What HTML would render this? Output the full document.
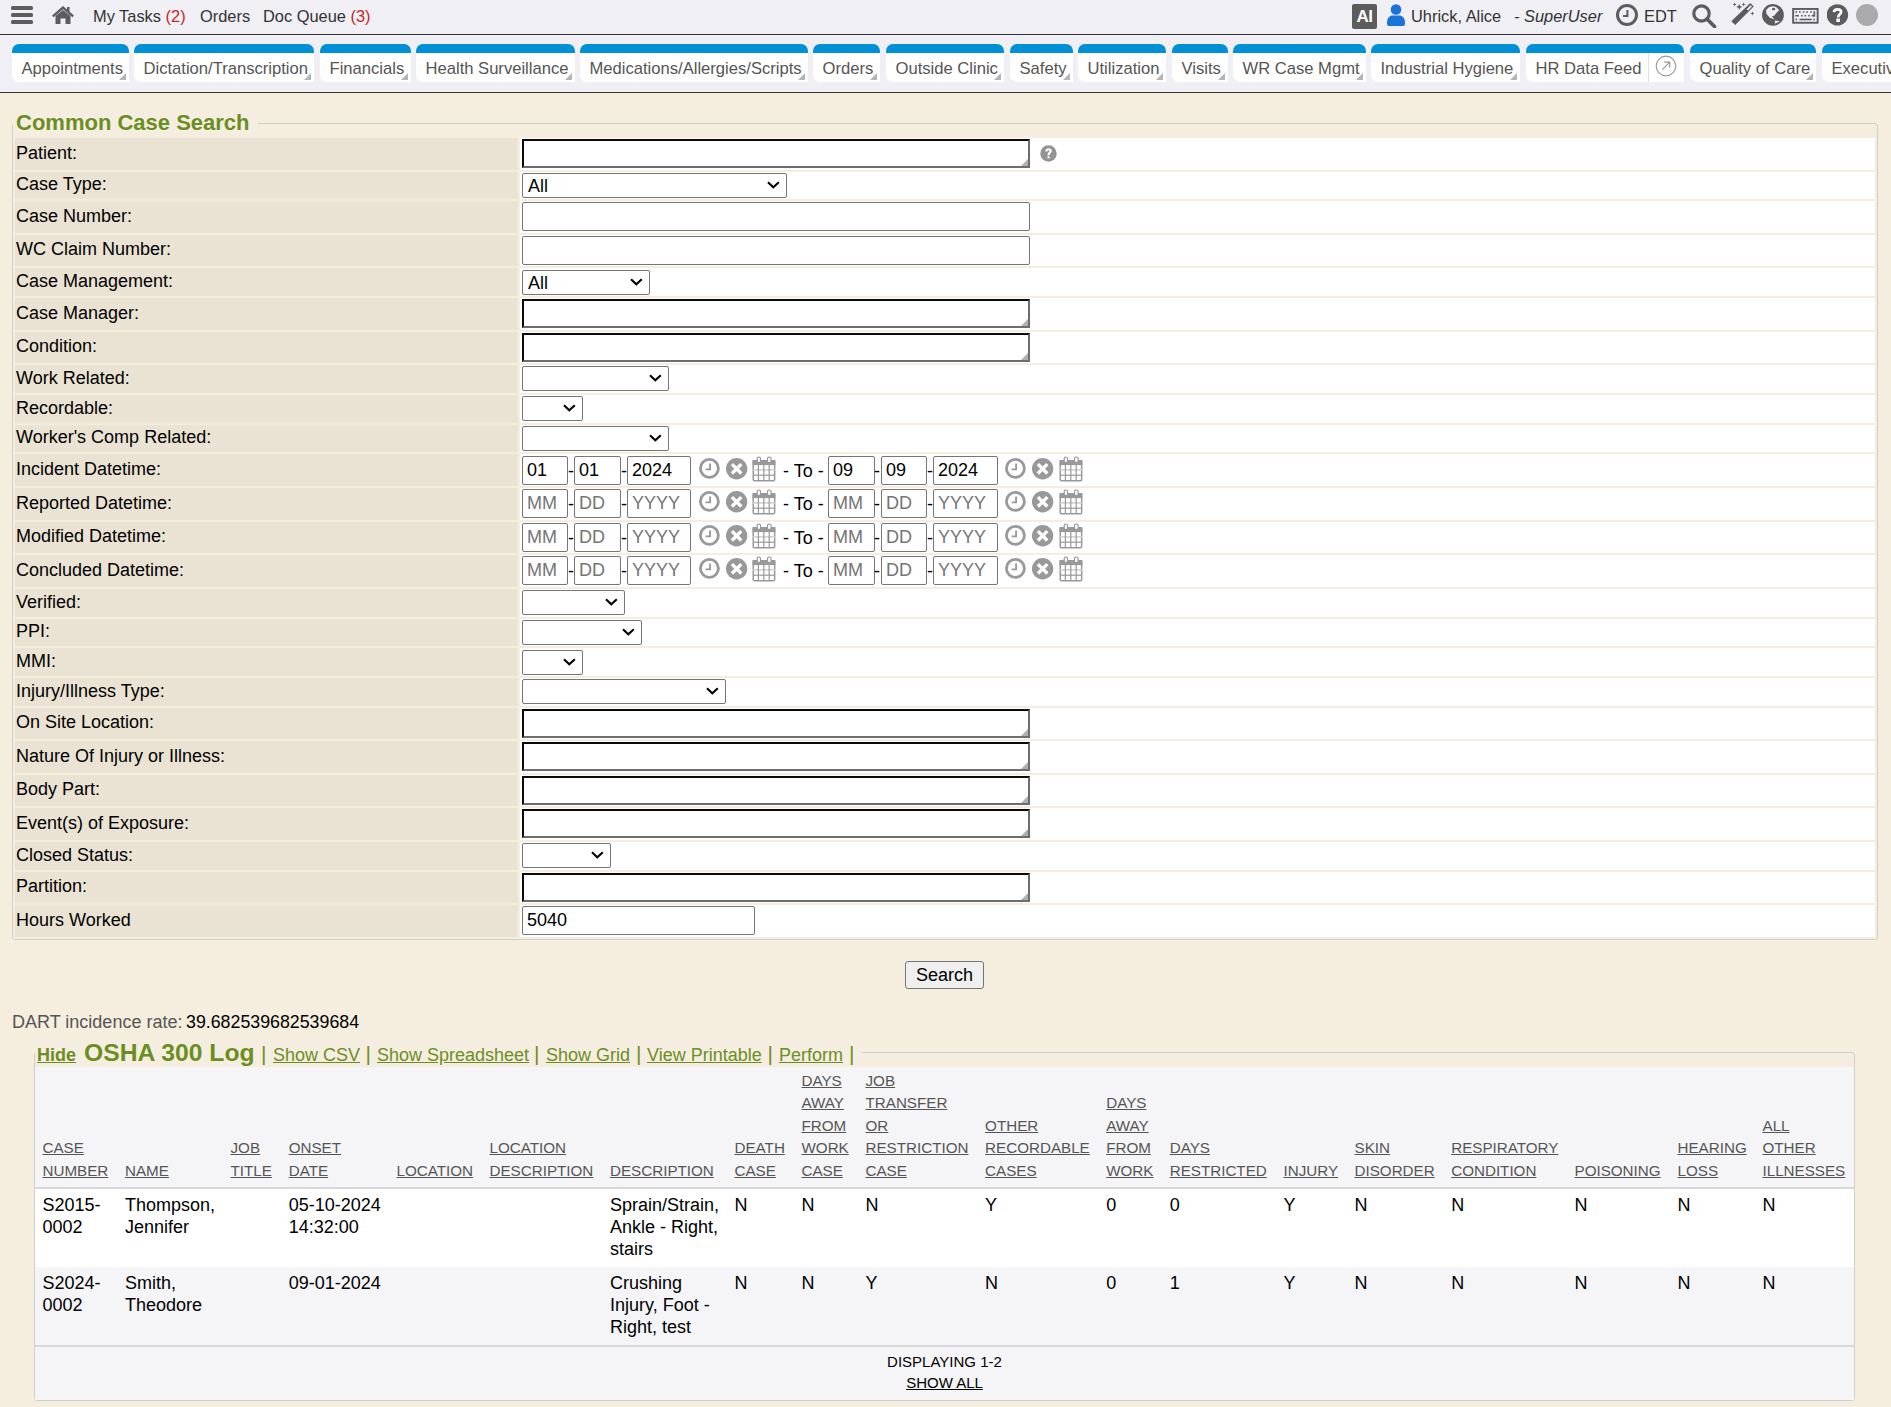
<!DOCTYPE html>
<html><head><meta charset="utf-8">
<style>
*{box-sizing:border-box}
html,body{margin:0;padding:0}
body{width:1891px;height:1407px;overflow:hidden;background:#f5eedf;font-family:"Liberation Sans",sans-serif;position:relative;color:#000}
.abs{position:absolute}
#top{position:absolute;left:0;top:0;width:1891px;height:35px;background:#efeff4;border-bottom:1px solid #333}
#top .t{position:absolute;top:6px;font-size:16.4px;color:#333;white-space:nowrap;line-height:20px}
#top .r{color:#c0282d}
#tabs{position:absolute;left:0;top:35px;width:1891px;height:58px;background:#efeff4;border-bottom:1px solid #333;overflow:hidden}
.tab{position:absolute;top:9px;height:38px;background:#fff;border-top:9px solid #0090d6;border-radius:7px 7px 0 7px;white-space:nowrap}
.tab span{position:absolute;left:9.5px;top:6px;font-size:16.6px;color:#555;line-height:19px}
.tab i{position:absolute;right:3px;bottom:2px;width:0;height:0;border-left:7px solid transparent;border-bottom:7px solid #b4b4b4}
</style></head><body>
<div id="top">
  <svg class="abs" style="left:11px;top:6px" width="22" height="18" viewBox="0 0 22 18"><rect x="0" y="0" width="22" height="4" rx="1.5" fill="#5c5c5c"/><rect x="0" y="7" width="22" height="4" rx="1.5" fill="#5c5c5c"/><rect x="0" y="14" width="22" height="4" rx="1.5" fill="#5c5c5c"/></svg>
  <svg class="abs" style="left:52px;top:6px" width="22" height="18" viewBox="0 0 22 18"><path d="M11 0 L0 9.5 L1.6 11.2 L11 3.2 L20.4 11.2 L22 9.5 L17.5 5.6 V1 H15 V3.5 Z" fill="#5c5c5c"/><path d="M3.5 10 L11 4 L18.5 10 V18 H13.5 V12.5 H8.5 V18 H3.5 Z" fill="#5c5c5c"/></svg>
  <div class="t" style="left:93px">My Tasks <span class="r">(2)</span></div>
  <div class="t" style="left:200px">Orders</div>
  <div class="t" style="left:263px">Doc Queue <span class="r">(3)</span></div>

  <div class="abs" style="left:1352px;top:4px;width:25px;height:25px;background:#5c5c5c;border-radius:2px;color:#fff;font-weight:bold;font-size:17px;line-height:25px;text-align:center;letter-spacing:-0.5px">AI</div>
  <svg class="abs" style="left:1387px;top:4px" width="18" height="22" viewBox="0 0 18 22"><circle cx="9" cy="5.5" r="5.3" fill="#1a73d9"/><path d="M0 19 C0 13.5 3 11.5 5.5 11.5 L12.5 11.5 C15 11.5 18 13.5 18 19 V20 Q18 22 16 22 H2 Q0 22 0 20 Z" fill="#1a73d9"/></svg>
  <div class="t" style="left:1411px">Uhrick, Alice</div>
  <div class="t" style="left:1514px;font-style:italic">- SuperUser</div>
  <svg class="abs" style="left:1616px;top:4px" width="22" height="22" viewBox="0 0 22 22"><circle cx="11" cy="11" r="9.5" fill="none" stroke="#5c5c5c" stroke-width="3"/><path d="M11.4 6 V11.9 H7" fill="none" stroke="#5c5c5c" stroke-width="2"/></svg>
  <div class="t" style="left:1644px">EDT</div>
  <svg class="abs" style="left:1692px;top:4px" width="25" height="24" viewBox="0 0 25 24"><circle cx="9.5" cy="9.5" r="7.7" fill="none" stroke="#5c5c5c" stroke-width="3.2"/><path d="M15 15 L22.5 22.5" stroke="#5c5c5c" stroke-width="3.8" stroke-linecap="round"/></svg>
  <svg class="abs" style="left:1726px;top:0px" width="34" height="30" viewBox="0 0 34 30"><path d="M5.3 21.3 L9.2 24.9 L27.7 6.4 L24.3 3 Z" fill="#5c5c5c"/><path d="M20.6 9.3 L22.1 10.6 L26 6.6 L24.6 5.2 Z" fill="#efeff4"/><path d="M8.6 2.4000000000000004 L9.16 3.84 L10.6 4.4 L9.16 4.96 L8.6 6.4 L8.04 4.96 L6.6 4.4 L8.04 3.84 Z M13.3 3.7 L14.20 6.00 L16.5 6.9 L14.20 7.80 L13.3 10.100000000000001 L12.40 7.80 L10.100000000000001 6.9 L12.40 6.00 Z M17.6 2.4000000000000004 L18.16 3.84 L19.6 4.4 L18.16 4.96 L17.6 6.4 L17.04 4.96 L15.600000000000001 4.4 L17.04 3.84 Z M26.4 11.4 L26.96 12.84 L28.4 13.4 L26.96 13.96 L26.4 15.4 L25.84 13.96 L24.4 13.4 L25.84 12.84 Z" fill="#5c5c5c"/></svg>
  <svg class="abs" style="left:1758px;top:0px" width="30" height="28" viewBox="0 0 30 28"><circle cx="14.95" cy="14.9" r="10.9" fill="#5c5c5c"/><path d="M8.1 10 L11.1 7 L14.9 6.3 L18.1 7 L21.3 10.2 L19.2 11.9 L16.2 15.8 L13.9 16.6 L16.6 19.6 L11.9 17.7 L8.5 13.9 Z" fill="#efeff4"/><path d="M14.1 8.1 H17.1 V10.2 H14.1 Z" fill="#5c5c5c"/><path d="M17.1 20.5 L22 21.3 L16.8 23.7 Z" fill="#efeff4"/></svg>
  <svg class="abs" style="left:1788px;top:0px" width="34" height="28" viewBox="0 0 34 28"><rect x="5.15" y="8.95" width="24.5" height="13.8" fill="none" stroke="#5c5c5c" stroke-width="1.9"/><g fill="#5c5c5c"><rect x="7.5" y="11.2" width="1.6" height="1.6"/><rect x="11" y="11.2" width="1.6" height="1.6"/><rect x="14.8" y="11.2" width="1.6" height="1.6"/><rect x="18.3" y="11.2" width="1.6" height="1.6"/><rect x="22.2" y="11.2" width="1.6" height="1.6"/><rect x="25.5" y="11.2" width="1.6" height="5.3"/><rect x="7.3" y="14.9" width="3.5" height="1.6"/><rect x="13" y="14.9" width="1.6" height="1.6"/><rect x="16.5" y="14.9" width="1.6" height="1.6"/><rect x="20.2" y="14.9" width="1.6" height="1.6"/><rect x="23.6" y="14.9" width="3.5" height="1.6"/><rect x="7.5" y="18.7" width="1.6" height="1.6"/><rect x="11.5" y="18.7" width="12.2" height="1.6"/><rect x="25.3" y="18.7" width="1.6" height="1.6"/></g></svg>
  <svg class="abs" style="left:1827px;top:4px" width="22" height="22" viewBox="0 0 22 22"><circle cx="10.4" cy="10.9" r="10.7" fill="#5c5c5c"/><path d="M6.9 8.1 C7.1 6.2 8.7 5.3 10.5 5.3 C12.6 5.3 14.1 6.4 14.1 8 C14.1 10.2 11.3 10.6 11.3 12.5 V13.6" fill="none" stroke="#fff" stroke-width="2.7"/><rect x="9.3" y="14.6" width="3.6" height="3.4" fill="#fff"/></svg>
  <div class="abs" style="left:1856px;top:4px;width:22px;height:22px;border-radius:50%;background:#aaa"></div>
</div>
<div id="tabs">
  <div class="tab" style="left:12px;width:117px"><span>Appointments</span><i></i></div>
  <div class="tab" style="left:134px;width:180px"><span>Dictation/Transcription</span><i></i></div>
  <div class="tab" style="left:320px;width:91px"><span>Financials</span><i></i></div>
  <div class="tab" style="left:416px;width:159px"><span>Health Surveillance</span><i></i></div>
  <div class="tab" style="left:580px;width:228px"><span>Medications/Allergies/Scripts</span><i></i></div>
  <div class="tab" style="left:813px;width:67px"><span>Orders</span><i></i></div>
  <div class="tab" style="left:886px;width:118px"><span>Outside Clinic</span><i></i></div>
  <div class="tab" style="left:1010px;width:63px"><span>Safety</span><i></i></div>
  <div class="tab" style="left:1078px;width:88px"><span>Utilization</span><i></i></div>
  <div class="tab" style="left:1172px;width:56px"><span>Visits</span><i></i></div>
  <div class="tab" style="left:1233px;width:133px"><span>WR Case Mgmt</span><i></i></div>
  <div class="tab" style="left:1371px;width:149px"><span>Industrial Hygiene</span><i></i></div>
  <div class="tab" style="left:1526px;width:158px"><span>HR Data Feed</span><div class="abs" style="left:122px;top:0;width:1px;height:29px;background:#e0e0e0"></div><svg class="abs" style="left:129px;top:2px" width="22" height="22" viewBox="0 0 22 22"><circle cx="11" cy="11" r="9.8" fill="none" stroke="#9a9a9a" stroke-width="1.2"/><path d="M7.3 14.7 L14.6 7.4 M9.2 7.2 H14.8 V12.8" fill="none" stroke="#9a9a9a" stroke-width="1.2"/></svg></div>
  <div class="tab" style="left:1690px;width:126px"><span>Quality of Care</span><i></i></div>
  <div class="tab" style="left:1822px;width:120px"><span>Executive</span><i></i></div>
</div>

<style>
#fs{position:absolute;left:12px;top:123px;width:1866px;height:817px;border:1px solid #cfcfcf;border-radius:3px}
#lg{position:absolute;left:13px;top:110px;width:245px;height:26px;background:#f5eee0}
#lg span{position:absolute;left:3px;top:0;font-size:22px;font-weight:bold;color:#6b8e23;line-height:26px;white-space:nowrap}
.lb{position:absolute;left:15px;width:503px;background:#eae3d3}
.lb span{position:absolute;left:1px;top:-1px;font-size:18px;white-space:nowrap}
.vl{position:absolute;left:520px;width:1355px;background:#fff}
.ta{position:absolute;left:522px;width:508px;height:29px;background:#fff;border-style:solid;border-width:2px;border-color:#0a0a0a #6d6d6d #6d6d6d #0a0a0a}
.ta i{position:absolute;right:0;bottom:0;width:0;height:0;border-left:7px solid transparent;border-bottom:7px solid #b0b0b0}
.sel{position:absolute;left:522px;height:25px;background:#fff;border:1px solid #767676;border-radius:2px}
.sel span{position:absolute;left:5px;top:1.7px;font-size:18px;line-height:21px}
.sel svg{position:absolute;right:5.6px;top:7.4px}
.inp{position:absolute;height:29px;background:#fff;border:1px solid #767676;border-radius:2px}
.inp span{position:absolute;left:4px;top:3px;font-size:18px;line-height:21px;white-space:nowrap}
.inp span.ph{color:#757575}
.dash{position:absolute;font-size:18px;line-height:21px}
.ico{position:absolute}
.to{position:absolute;font-size:18px;line-height:21px;white-space:nowrap}
</style>
<div id="fs"></div><div id="lg"><span>Common Case Search</span></div><div class="lb" style="top:138px;height:32px;line-height:32px"><span>Patient:</span></div><div class="vl" style="top:138px;height:32px"></div><div class="ta" style="top:139px"><i></i></div><div class="lb" style="top:172px;height:27px;line-height:27px"><span>Case Type:</span></div><div class="vl" style="top:172px;height:27px"></div><div class="sel" style="top:173px;width:265px"><span>All</span><svg width="13" height="8" viewBox="0 0 13 8"><path d="M1 1.3 L6.3 6.3 L11.8 1.3" fill="none" stroke="#000" stroke-width="2.1"/></svg></div><div class="lb" style="top:201px;height:32px;line-height:32px"><span>Case Number:</span></div><div class="vl" style="top:201px;height:32px"></div><div class="inp" style="left:522px;top:202px;width:508px"><span></span></div><div class="lb" style="top:235px;height:31px;line-height:31px"><span>WC Claim Number:</span></div><div class="vl" style="top:235px;height:31px"></div><div class="inp" style="left:522px;top:236px;width:508px"><span></span></div><div class="lb" style="top:268px;height:28px;line-height:28px"><span>Case Management:</span></div><div class="vl" style="top:268px;height:28px"></div><div class="sel" style="top:270px;width:128px"><span>All</span><svg width="13" height="8" viewBox="0 0 13 8"><path d="M1 1.3 L6.3 6.3 L11.8 1.3" fill="none" stroke="#000" stroke-width="2.1"/></svg></div><div class="lb" style="top:298px;height:32px;line-height:32px"><span>Case Manager:</span></div><div class="vl" style="top:298px;height:32px"></div><div class="ta" style="top:299px"><i></i></div><div class="lb" style="top:332px;height:31px;line-height:31px"><span>Condition:</span></div><div class="vl" style="top:332px;height:31px"></div><div class="ta" style="top:333px"><i></i></div><div class="lb" style="top:365px;height:28px;line-height:28px"><span>Work Related:</span></div><div class="vl" style="top:365px;height:28px"></div><div class="sel" style="top:366px;width:147px"><span></span><svg width="13" height="8" viewBox="0 0 13 8"><path d="M1 1.3 L6.3 6.3 L11.8 1.3" fill="none" stroke="#000" stroke-width="2.1"/></svg></div><div class="lb" style="top:395px;height:28px;line-height:28px"><span>Recordable:</span></div><div class="vl" style="top:395px;height:28px"></div><div class="sel" style="top:396px;width:61px"><span></span><svg width="13" height="8" viewBox="0 0 13 8"><path d="M1 1.3 L6.3 6.3 L11.8 1.3" fill="none" stroke="#000" stroke-width="2.1"/></svg></div><div class="lb" style="top:425px;height:27px;line-height:27px"><span>Worker's Comp Related:</span></div><div class="vl" style="top:425px;height:27px"></div><div class="sel" style="top:426px;width:147px"><span></span><svg width="13" height="8" viewBox="0 0 13 8"><path d="M1 1.3 L6.3 6.3 L11.8 1.3" fill="none" stroke="#000" stroke-width="2.1"/></svg></div><div class="lb" style="top:454px;height:32px;line-height:32px"><span>Incident Datetime:</span></div><div class="vl" style="top:454px;height:32px"></div><div class="inp" style="left:522px;top:456px;width:46px"><span>01</span></div><div class="inp" style="left:574px;top:456px;width:47px"><span>01</span></div><div class="inp" style="left:627px;top:456px;width:64px"><span>2024</span></div><div class="dash" style="left:568px;top:461px">-</div><div class="dash" style="left:621px;top:461px">-</div><svg class="ico" style="left:699px;top:458px" width="21" height="21" viewBox="0 0 21 21"><circle cx="10.4" cy="10.4" r="9" fill="none" stroke="#999" stroke-width="2.8"/><path d="M11.1 5.5 V11.4 H6.6" fill="none" stroke="#999" stroke-width="1.9"/></svg><svg class="ico" style="left:726px;top:458px" width="23" height="23" viewBox="0 0 23 23"><circle cx="10.6" cy="10.8" r="10.7" fill="#999"/><path d="M5.9 6.1 L15.3 15.5 M15.3 6.1 L5.9 15.5" stroke="#fff" stroke-width="3.3"/></svg><svg class="ico" style="left:752px;top:456px" width="25" height="27" viewBox="0 0 25 27"><rect x="1.25" y="4.75" width="21.4" height="20" rx="1.2" fill="#fff" stroke="#999" stroke-width="1.5"/><rect x="0.5" y="4" width="22.9" height="5.1" fill="#999"/><line x1="1" y1="13.9" x2="23" y2="13.9" stroke="#cfcfcf" stroke-width="1.5"/><line x1="1" y1="19.2" x2="23" y2="19.2" stroke="#999" stroke-width="1.2"/><line x1="6.4" y1="8" x2="6.4" y2="25" stroke="#999" stroke-width="1.2"/><line x1="11.8" y1="8" x2="11.8" y2="25" stroke="#999" stroke-width="1.2"/><line x1="17.2" y1="8" x2="17.2" y2="25" stroke="#999" stroke-width="1.2"/><rect x="5.2" y="1" width="3.3" height="5.6" rx="1.6" fill="#fff" stroke="#999" stroke-width="1.2"/><rect x="15.5" y="1" width="3.6" height="5.6" rx="1.6" fill="#fff" stroke="#999" stroke-width="1.2"/></svg><div class="inp" style="left:828px;top:456px;width:47px"><span>09</span></div><div class="inp" style="left:881px;top:456px;width:46px"><span>09</span></div><div class="inp" style="left:933px;top:456px;width:65px"><span>2024</span></div><div class="dash" style="left:874px;top:461px">-</div><div class="dash" style="left:927px;top:461px">-</div><svg class="ico" style="left:1005px;top:458px" width="21" height="21" viewBox="0 0 21 21"><circle cx="10.4" cy="10.4" r="9" fill="none" stroke="#999" stroke-width="2.8"/><path d="M11.1 5.5 V11.4 H6.6" fill="none" stroke="#999" stroke-width="1.9"/></svg><svg class="ico" style="left:1032px;top:458px" width="23" height="23" viewBox="0 0 23 23"><circle cx="10.6" cy="10.8" r="10.7" fill="#999"/><path d="M5.9 6.1 L15.3 15.5 M15.3 6.1 L5.9 15.5" stroke="#fff" stroke-width="3.3"/></svg><svg class="ico" style="left:1059px;top:456px" width="25" height="27" viewBox="0 0 25 27"><rect x="1.25" y="4.75" width="21.4" height="20" rx="1.2" fill="#fff" stroke="#999" stroke-width="1.5"/><rect x="0.5" y="4" width="22.9" height="5.1" fill="#999"/><line x1="1" y1="13.9" x2="23" y2="13.9" stroke="#cfcfcf" stroke-width="1.5"/><line x1="1" y1="19.2" x2="23" y2="19.2" stroke="#999" stroke-width="1.2"/><line x1="6.4" y1="8" x2="6.4" y2="25" stroke="#999" stroke-width="1.2"/><line x1="11.8" y1="8" x2="11.8" y2="25" stroke="#999" stroke-width="1.2"/><line x1="17.2" y1="8" x2="17.2" y2="25" stroke="#999" stroke-width="1.2"/><rect x="5.2" y="1" width="3.3" height="5.6" rx="1.6" fill="#fff" stroke="#999" stroke-width="1.2"/><rect x="15.5" y="1" width="3.6" height="5.6" rx="1.6" fill="#fff" stroke="#999" stroke-width="1.2"/></svg><div class="to" style="left:783px;top:461px">- To -</div><div class="lb" style="top:488px;height:32px;line-height:32px"><span>Reported Datetime:</span></div><div class="vl" style="top:488px;height:32px"></div><div class="inp" style="left:522px;top:489px;width:46px"><span class="ph">MM</span></div><div class="inp" style="left:574px;top:489px;width:47px"><span class="ph">DD</span></div><div class="inp" style="left:627px;top:489px;width:64px"><span class="ph">YYYY</span></div><div class="dash" style="left:568px;top:494px">-</div><div class="dash" style="left:621px;top:494px">-</div><svg class="ico" style="left:699px;top:491px" width="21" height="21" viewBox="0 0 21 21"><circle cx="10.4" cy="10.4" r="9" fill="none" stroke="#999" stroke-width="2.8"/><path d="M11.1 5.5 V11.4 H6.6" fill="none" stroke="#999" stroke-width="1.9"/></svg><svg class="ico" style="left:726px;top:491px" width="23" height="23" viewBox="0 0 23 23"><circle cx="10.6" cy="10.8" r="10.7" fill="#999"/><path d="M5.9 6.1 L15.3 15.5 M15.3 6.1 L5.9 15.5" stroke="#fff" stroke-width="3.3"/></svg><svg class="ico" style="left:752px;top:489px" width="25" height="27" viewBox="0 0 25 27"><rect x="1.25" y="4.75" width="21.4" height="20" rx="1.2" fill="#fff" stroke="#999" stroke-width="1.5"/><rect x="0.5" y="4" width="22.9" height="5.1" fill="#999"/><line x1="1" y1="13.9" x2="23" y2="13.9" stroke="#cfcfcf" stroke-width="1.5"/><line x1="1" y1="19.2" x2="23" y2="19.2" stroke="#999" stroke-width="1.2"/><line x1="6.4" y1="8" x2="6.4" y2="25" stroke="#999" stroke-width="1.2"/><line x1="11.8" y1="8" x2="11.8" y2="25" stroke="#999" stroke-width="1.2"/><line x1="17.2" y1="8" x2="17.2" y2="25" stroke="#999" stroke-width="1.2"/><rect x="5.2" y="1" width="3.3" height="5.6" rx="1.6" fill="#fff" stroke="#999" stroke-width="1.2"/><rect x="15.5" y="1" width="3.6" height="5.6" rx="1.6" fill="#fff" stroke="#999" stroke-width="1.2"/></svg><div class="inp" style="left:828px;top:489px;width:47px"><span class="ph">MM</span></div><div class="inp" style="left:881px;top:489px;width:46px"><span class="ph">DD</span></div><div class="inp" style="left:933px;top:489px;width:65px"><span class="ph">YYYY</span></div><div class="dash" style="left:874px;top:494px">-</div><div class="dash" style="left:927px;top:494px">-</div><svg class="ico" style="left:1005px;top:491px" width="21" height="21" viewBox="0 0 21 21"><circle cx="10.4" cy="10.4" r="9" fill="none" stroke="#999" stroke-width="2.8"/><path d="M11.1 5.5 V11.4 H6.6" fill="none" stroke="#999" stroke-width="1.9"/></svg><svg class="ico" style="left:1032px;top:491px" width="23" height="23" viewBox="0 0 23 23"><circle cx="10.6" cy="10.8" r="10.7" fill="#999"/><path d="M5.9 6.1 L15.3 15.5 M15.3 6.1 L5.9 15.5" stroke="#fff" stroke-width="3.3"/></svg><svg class="ico" style="left:1059px;top:489px" width="25" height="27" viewBox="0 0 25 27"><rect x="1.25" y="4.75" width="21.4" height="20" rx="1.2" fill="#fff" stroke="#999" stroke-width="1.5"/><rect x="0.5" y="4" width="22.9" height="5.1" fill="#999"/><line x1="1" y1="13.9" x2="23" y2="13.9" stroke="#cfcfcf" stroke-width="1.5"/><line x1="1" y1="19.2" x2="23" y2="19.2" stroke="#999" stroke-width="1.2"/><line x1="6.4" y1="8" x2="6.4" y2="25" stroke="#999" stroke-width="1.2"/><line x1="11.8" y1="8" x2="11.8" y2="25" stroke="#999" stroke-width="1.2"/><line x1="17.2" y1="8" x2="17.2" y2="25" stroke="#999" stroke-width="1.2"/><rect x="5.2" y="1" width="3.3" height="5.6" rx="1.6" fill="#fff" stroke="#999" stroke-width="1.2"/><rect x="15.5" y="1" width="3.6" height="5.6" rx="1.6" fill="#fff" stroke="#999" stroke-width="1.2"/></svg><div class="to" style="left:783px;top:494px">- To -</div><div class="lb" style="top:522px;height:31px;line-height:31px"><span>Modified Datetime:</span></div><div class="vl" style="top:522px;height:31px"></div><div class="inp" style="left:522px;top:523px;width:46px"><span class="ph">MM</span></div><div class="inp" style="left:574px;top:523px;width:47px"><span class="ph">DD</span></div><div class="inp" style="left:627px;top:523px;width:64px"><span class="ph">YYYY</span></div><div class="dash" style="left:568px;top:528px">-</div><div class="dash" style="left:621px;top:528px">-</div><svg class="ico" style="left:699px;top:525px" width="21" height="21" viewBox="0 0 21 21"><circle cx="10.4" cy="10.4" r="9" fill="none" stroke="#999" stroke-width="2.8"/><path d="M11.1 5.5 V11.4 H6.6" fill="none" stroke="#999" stroke-width="1.9"/></svg><svg class="ico" style="left:726px;top:525px" width="23" height="23" viewBox="0 0 23 23"><circle cx="10.6" cy="10.8" r="10.7" fill="#999"/><path d="M5.9 6.1 L15.3 15.5 M15.3 6.1 L5.9 15.5" stroke="#fff" stroke-width="3.3"/></svg><svg class="ico" style="left:752px;top:523px" width="25" height="27" viewBox="0 0 25 27"><rect x="1.25" y="4.75" width="21.4" height="20" rx="1.2" fill="#fff" stroke="#999" stroke-width="1.5"/><rect x="0.5" y="4" width="22.9" height="5.1" fill="#999"/><line x1="1" y1="13.9" x2="23" y2="13.9" stroke="#cfcfcf" stroke-width="1.5"/><line x1="1" y1="19.2" x2="23" y2="19.2" stroke="#999" stroke-width="1.2"/><line x1="6.4" y1="8" x2="6.4" y2="25" stroke="#999" stroke-width="1.2"/><line x1="11.8" y1="8" x2="11.8" y2="25" stroke="#999" stroke-width="1.2"/><line x1="17.2" y1="8" x2="17.2" y2="25" stroke="#999" stroke-width="1.2"/><rect x="5.2" y="1" width="3.3" height="5.6" rx="1.6" fill="#fff" stroke="#999" stroke-width="1.2"/><rect x="15.5" y="1" width="3.6" height="5.6" rx="1.6" fill="#fff" stroke="#999" stroke-width="1.2"/></svg><div class="inp" style="left:828px;top:523px;width:47px"><span class="ph">MM</span></div><div class="inp" style="left:881px;top:523px;width:46px"><span class="ph">DD</span></div><div class="inp" style="left:933px;top:523px;width:65px"><span class="ph">YYYY</span></div><div class="dash" style="left:874px;top:528px">-</div><div class="dash" style="left:927px;top:528px">-</div><svg class="ico" style="left:1005px;top:525px" width="21" height="21" viewBox="0 0 21 21"><circle cx="10.4" cy="10.4" r="9" fill="none" stroke="#999" stroke-width="2.8"/><path d="M11.1 5.5 V11.4 H6.6" fill="none" stroke="#999" stroke-width="1.9"/></svg><svg class="ico" style="left:1032px;top:525px" width="23" height="23" viewBox="0 0 23 23"><circle cx="10.6" cy="10.8" r="10.7" fill="#999"/><path d="M5.9 6.1 L15.3 15.5 M15.3 6.1 L5.9 15.5" stroke="#fff" stroke-width="3.3"/></svg><svg class="ico" style="left:1059px;top:523px" width="25" height="27" viewBox="0 0 25 27"><rect x="1.25" y="4.75" width="21.4" height="20" rx="1.2" fill="#fff" stroke="#999" stroke-width="1.5"/><rect x="0.5" y="4" width="22.9" height="5.1" fill="#999"/><line x1="1" y1="13.9" x2="23" y2="13.9" stroke="#cfcfcf" stroke-width="1.5"/><line x1="1" y1="19.2" x2="23" y2="19.2" stroke="#999" stroke-width="1.2"/><line x1="6.4" y1="8" x2="6.4" y2="25" stroke="#999" stroke-width="1.2"/><line x1="11.8" y1="8" x2="11.8" y2="25" stroke="#999" stroke-width="1.2"/><line x1="17.2" y1="8" x2="17.2" y2="25" stroke="#999" stroke-width="1.2"/><rect x="5.2" y="1" width="3.3" height="5.6" rx="1.6" fill="#fff" stroke="#999" stroke-width="1.2"/><rect x="15.5" y="1" width="3.6" height="5.6" rx="1.6" fill="#fff" stroke="#999" stroke-width="1.2"/></svg><div class="to" style="left:783px;top:528px">- To -</div><div class="lb" style="top:555px;height:32px;line-height:32px"><span>Concluded Datetime:</span></div><div class="vl" style="top:555px;height:32px"></div><div class="inp" style="left:522px;top:556px;width:46px"><span class="ph">MM</span></div><div class="inp" style="left:574px;top:556px;width:47px"><span class="ph">DD</span></div><div class="inp" style="left:627px;top:556px;width:64px"><span class="ph">YYYY</span></div><div class="dash" style="left:568px;top:561px">-</div><div class="dash" style="left:621px;top:561px">-</div><svg class="ico" style="left:699px;top:558px" width="21" height="21" viewBox="0 0 21 21"><circle cx="10.4" cy="10.4" r="9" fill="none" stroke="#999" stroke-width="2.8"/><path d="M11.1 5.5 V11.4 H6.6" fill="none" stroke="#999" stroke-width="1.9"/></svg><svg class="ico" style="left:726px;top:558px" width="23" height="23" viewBox="0 0 23 23"><circle cx="10.6" cy="10.8" r="10.7" fill="#999"/><path d="M5.9 6.1 L15.3 15.5 M15.3 6.1 L5.9 15.5" stroke="#fff" stroke-width="3.3"/></svg><svg class="ico" style="left:752px;top:556px" width="25" height="27" viewBox="0 0 25 27"><rect x="1.25" y="4.75" width="21.4" height="20" rx="1.2" fill="#fff" stroke="#999" stroke-width="1.5"/><rect x="0.5" y="4" width="22.9" height="5.1" fill="#999"/><line x1="1" y1="13.9" x2="23" y2="13.9" stroke="#cfcfcf" stroke-width="1.5"/><line x1="1" y1="19.2" x2="23" y2="19.2" stroke="#999" stroke-width="1.2"/><line x1="6.4" y1="8" x2="6.4" y2="25" stroke="#999" stroke-width="1.2"/><line x1="11.8" y1="8" x2="11.8" y2="25" stroke="#999" stroke-width="1.2"/><line x1="17.2" y1="8" x2="17.2" y2="25" stroke="#999" stroke-width="1.2"/><rect x="5.2" y="1" width="3.3" height="5.6" rx="1.6" fill="#fff" stroke="#999" stroke-width="1.2"/><rect x="15.5" y="1" width="3.6" height="5.6" rx="1.6" fill="#fff" stroke="#999" stroke-width="1.2"/></svg><div class="inp" style="left:828px;top:556px;width:47px"><span class="ph">MM</span></div><div class="inp" style="left:881px;top:556px;width:46px"><span class="ph">DD</span></div><div class="inp" style="left:933px;top:556px;width:65px"><span class="ph">YYYY</span></div><div class="dash" style="left:874px;top:561px">-</div><div class="dash" style="left:927px;top:561px">-</div><svg class="ico" style="left:1005px;top:558px" width="21" height="21" viewBox="0 0 21 21"><circle cx="10.4" cy="10.4" r="9" fill="none" stroke="#999" stroke-width="2.8"/><path d="M11.1 5.5 V11.4 H6.6" fill="none" stroke="#999" stroke-width="1.9"/></svg><svg class="ico" style="left:1032px;top:558px" width="23" height="23" viewBox="0 0 23 23"><circle cx="10.6" cy="10.8" r="10.7" fill="#999"/><path d="M5.9 6.1 L15.3 15.5 M15.3 6.1 L5.9 15.5" stroke="#fff" stroke-width="3.3"/></svg><svg class="ico" style="left:1059px;top:556px" width="25" height="27" viewBox="0 0 25 27"><rect x="1.25" y="4.75" width="21.4" height="20" rx="1.2" fill="#fff" stroke="#999" stroke-width="1.5"/><rect x="0.5" y="4" width="22.9" height="5.1" fill="#999"/><line x1="1" y1="13.9" x2="23" y2="13.9" stroke="#cfcfcf" stroke-width="1.5"/><line x1="1" y1="19.2" x2="23" y2="19.2" stroke="#999" stroke-width="1.2"/><line x1="6.4" y1="8" x2="6.4" y2="25" stroke="#999" stroke-width="1.2"/><line x1="11.8" y1="8" x2="11.8" y2="25" stroke="#999" stroke-width="1.2"/><line x1="17.2" y1="8" x2="17.2" y2="25" stroke="#999" stroke-width="1.2"/><rect x="5.2" y="1" width="3.3" height="5.6" rx="1.6" fill="#fff" stroke="#999" stroke-width="1.2"/><rect x="15.5" y="1" width="3.6" height="5.6" rx="1.6" fill="#fff" stroke="#999" stroke-width="1.2"/></svg><div class="to" style="left:783px;top:561px">- To -</div><div class="lb" style="top:589px;height:28px;line-height:28px"><span>Verified:</span></div><div class="vl" style="top:589px;height:28px"></div><div class="sel" style="top:590px;width:103px"><span></span><svg width="13" height="8" viewBox="0 0 13 8"><path d="M1 1.3 L6.3 6.3 L11.8 1.3" fill="none" stroke="#000" stroke-width="2.1"/></svg></div><div class="lb" style="top:619px;height:27px;line-height:27px"><span>PPI:</span></div><div class="vl" style="top:619px;height:27px"></div><div class="sel" style="top:620px;width:120px"><span></span><svg width="13" height="8" viewBox="0 0 13 8"><path d="M1 1.3 L6.3 6.3 L11.8 1.3" fill="none" stroke="#000" stroke-width="2.1"/></svg></div><div class="lb" style="top:648px;height:28px;line-height:28px"><span>MMI:</span></div><div class="vl" style="top:648px;height:28px"></div><div class="sel" style="top:650px;width:61px"><span></span><svg width="13" height="8" viewBox="0 0 13 8"><path d="M1 1.3 L6.3 6.3 L11.8 1.3" fill="none" stroke="#000" stroke-width="2.1"/></svg></div><div class="lb" style="top:678px;height:28px;line-height:28px"><span>Injury/Illness Type:</span></div><div class="vl" style="top:678px;height:28px"></div><div class="sel" style="top:679px;width:204px"><span></span><svg width="13" height="8" viewBox="0 0 13 8"><path d="M1 1.3 L6.3 6.3 L11.8 1.3" fill="none" stroke="#000" stroke-width="2.1"/></svg></div><div class="lb" style="top:708px;height:31px;line-height:31px"><span>On Site Location:</span></div><div class="vl" style="top:708px;height:31px"></div><div class="ta" style="top:709px"><i></i></div><div class="lb" style="top:741px;height:32px;line-height:32px"><span>Nature Of Injury or Illness:</span></div><div class="vl" style="top:741px;height:32px"></div><div class="ta" style="top:742px"><i></i></div><div class="lb" style="top:775px;height:31px;line-height:31px"><span>Body Part:</span></div><div class="vl" style="top:775px;height:31px"></div><div class="ta" style="top:776px"><i></i></div><div class="lb" style="top:808px;height:32px;line-height:32px"><span>Event(s) of Exposure:</span></div><div class="vl" style="top:808px;height:32px"></div><div class="ta" style="top:809px"><i></i></div><div class="lb" style="top:842px;height:28px;line-height:28px"><span>Closed Status:</span></div><div class="vl" style="top:842px;height:28px"></div><div class="sel" style="top:843px;width:89px"><span></span><svg width="13" height="8" viewBox="0 0 13 8"><path d="M1 1.3 L6.3 6.3 L11.8 1.3" fill="none" stroke="#000" stroke-width="2.1"/></svg></div><div class="lb" style="top:872px;height:31px;line-height:31px"><span>Partition:</span></div><div class="vl" style="top:872px;height:31px"></div><div class="ta" style="top:873px"><i></i></div><div class="lb" style="top:905px;height:32px;line-height:32px"><span>Hours Worked</span></div><div class="vl" style="top:905px;height:32px"></div><div class="inp" style="left:522px;top:906px;width:233px"><span>5040</span></div><svg class="ico" style="left:1040px;top:145px" width="17" height="17" viewBox="0 0 17 17"><circle cx="8.5" cy="8.5" r="8.2" fill="#949494"/><path d="M5.3 6.4 C5.3 4.3 6.8 3.3 8.6 3.3 C10.5 3.3 11.8 4.4 11.8 6 C11.8 8 9.6 8.3 9.6 10 V10.3 H7.5 V9.7 C7.5 7.4 9.5 7.3 9.5 6.1 C9.5 5.5 9.1 5.2 8.5 5.2 C7.9 5.2 7.5 5.6 7.5 6.4 Z" fill="#fff"/><rect x="7.5" y="11.3" width="2.1" height="2.1" fill="#fff"/></svg><!--REST-->
<style>
#btn{position:absolute;left:905px;top:961px;width:79px;height:28px;background:#efefef;border:1px solid #767676;border-radius:3px;font-size:18px;line-height:26px;text-align:center}
#dart{position:absolute;left:12px;top:1011px;font-size:18px;line-height:22px;color:#555;white-space:nowrap}
#dart b{font-weight:normal;color:#000;position:absolute;left:174px;top:0;font-size:17.8px}
#fs2{position:absolute;left:34px;top:1052px;width:1821px;height:349px;border:1px solid #cfcfcf;border-radius:3px}
#lg2{position:absolute;left:35px;top:1038px;width:827px;height:28px;background:#f5eee0;white-space:nowrap;color:#6b8e23}
#lg2 span{position:absolute;top:0;line-height:28px}
#lg2 .u{text-decoration:underline}
#tbl{position:absolute;left:35px;top:1067px;width:1819px;height:333px;background:#f5f5f8}
.th{position:absolute;bottom:0;font-size:15.2px;line-height:22.4px;color:#555;text-decoration:underline;white-space:nowrap}
.td{position:absolute;font-size:18px;line-height:22.1px;white-space:nowrap}
</style>
<div id="btn">Search</div><div id="dart">DART incidence rate: <b>39.682539682539684</b></div><div id="fs2"></div><div id="lg2"><span class="u" style="left:2px;top:3px;font-size:18px;font-weight:bold">Hide</span><span style="left:49px;top:1px;font-size:24.7px;font-weight:bold">OSHA 300 Log</span><span class="u" style="left:238px;top:3px;font-size:18px">Show CSV</span><span class="u" style="left:342px;top:3px;font-size:18px">Show Spreadsheet</span><span class="u" style="left:511px;top:3px;font-size:18px">Show Grid</span><span class="u" style="left:612px;top:3px;font-size:18px">View Printable</span><span class="u" style="left:744px;top:3px;font-size:18px">Perform</span><span style="left:225.9px;top:2px;font-size:21px">|</span><span style="left:330.6px;top:2px;font-size:21px">|</span><span style="left:499.0px;top:2px;font-size:21px">|</span><span style="left:600.9px;top:2px;font-size:21px">|</span><span style="left:732.5px;top:2px;font-size:21px">|</span><span style="left:814.1px;top:2px;font-size:21px">|</span></div><div id="tbl"><div style="position:absolute;left:0;top:0;width:1819px;height:120px"><div class="th" style="left:7.5px;bottom:5px">CASE<br>NUMBER</div><div class="th" style="left:90.0px;bottom:5px">NAME</div><div class="th" style="left:195.5px;bottom:5px">JOB<br>TITLE</div><div class="th" style="left:253.7px;bottom:5px">ONSET<br>DATE</div><div class="th" style="left:361.5px;bottom:5px">LOCATION</div><div class="th" style="left:454.5px;bottom:5px">LOCATION<br>DESCRIPTION</div><div class="th" style="left:575.0px;bottom:5px">DESCRIPTION</div><div class="th" style="left:699.5px;bottom:5px">DEATH<br>CASE</div><div class="th" style="left:766.5px;bottom:5px">DAYS<br>AWAY<br>FROM<br>WORK<br>CASE</div><div class="th" style="left:830.5px;bottom:5px">JOB<br>TRANSFER<br>OR<br>RESTRICTION<br>CASE</div><div class="th" style="left:950.1px;bottom:5px">OTHER<br>RECORDABLE<br>CASES</div><div class="th" style="left:1071.2px;bottom:5px">DAYS<br>AWAY<br>FROM<br>WORK</div><div class="th" style="left:1134.7px;bottom:5px">DAYS<br>RESTRICTED</div><div class="th" style="left:1248.5px;bottom:5px">INJURY</div><div class="th" style="left:1319.5px;bottom:5px">SKIN<br>DISORDER</div><div class="th" style="left:1416.2px;bottom:5px">RESPIRATORY<br>CONDITION</div><div class="th" style="left:1539.5px;bottom:5px">POISONING</div><div class="th" style="left:1642.5px;bottom:5px">HEARING<br>LOSS</div><div class="th" style="left:1727.5px;bottom:5px">ALL<br>OTHER<br>ILLNESSES</div></div><div style="position:absolute;left:0;top:120px;width:1819px;height:2px;background:#d8d8d8"></div><div style="position:absolute;left:0;top:122px;width:1819px;height:78px;background:#fff"></div><div class="td" style="left:7.5px;top:126.5px">S2015-<br>0002</div><div class="td" style="left:90.0px;top:126.5px">Thompson,<br>Jennifer</div><div class="td" style="left:253.7px;top:126.5px">05-10-2024<br>14:32:00</div><div class="td" style="left:575.0px;top:126.5px">Sprain/Strain,<br>Ankle - Right,<br>stairs</div><div class="td" style="left:699.5px;top:126.5px">N</div><div class="td" style="left:766.5px;top:126.5px">N</div><div class="td" style="left:830.5px;top:126.5px">N</div><div class="td" style="left:950.1px;top:126.5px">Y</div><div class="td" style="left:1071.2px;top:126.5px">0</div><div class="td" style="left:1134.7px;top:126.5px">0</div><div class="td" style="left:1248.5px;top:126.5px">Y</div><div class="td" style="left:1319.5px;top:126.5px">N</div><div class="td" style="left:1416.2px;top:126.5px">N</div><div class="td" style="left:1539.5px;top:126.5px">N</div><div class="td" style="left:1642.5px;top:126.5px">N</div><div class="td" style="left:1727.5px;top:126.5px">N</div><div class="td" style="left:7.5px;top:204.5px">S2024-<br>0002</div><div class="td" style="left:90.0px;top:204.5px">Smith,<br>Theodore</div><div class="td" style="left:253.7px;top:204.5px">09-01-2024</div><div class="td" style="left:575.0px;top:204.5px">Crushing<br>Injury, Foot -<br>Right, test</div><div class="td" style="left:699.5px;top:204.5px">N</div><div class="td" style="left:766.5px;top:204.5px">N</div><div class="td" style="left:830.5px;top:204.5px">Y</div><div class="td" style="left:950.1px;top:204.5px">N</div><div class="td" style="left:1071.2px;top:204.5px">0</div><div class="td" style="left:1134.7px;top:204.5px">1</div><div class="td" style="left:1248.5px;top:204.5px">Y</div><div class="td" style="left:1319.5px;top:204.5px">N</div><div class="td" style="left:1416.2px;top:204.5px">N</div><div class="td" style="left:1539.5px;top:204.5px">N</div><div class="td" style="left:1642.5px;top:204.5px">N</div><div class="td" style="left:1727.5px;top:204.5px">N</div><div style="position:absolute;left:0;top:278px;width:1819px;height:2px;background:#d8d8d8"></div><div style="position:absolute;left:0;top:284px;width:1819px;text-align:center;font-size:15px;line-height:21.4px">DISPLAYING 1-2<br><span style="text-decoration:underline">SHOW ALL</span></div></div></body></html>
